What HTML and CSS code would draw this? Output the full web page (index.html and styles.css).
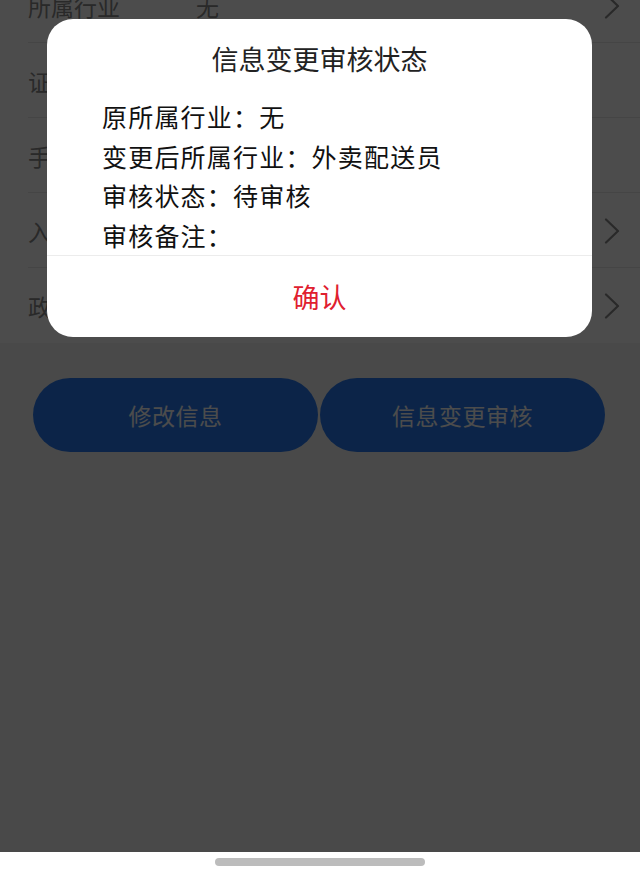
FILE: index.html
```html
<!DOCTYPE html>
<html lang="zh-CN">
<head>
<meta charset="utf-8">
<title>信息变更审核状态</title>
<link rel="stylesheet" href="styles.css">
</head>
<body>
<div class="screen">
  <div class="page">
    <ul class="list">
      <li class="row"><span class="label">所属行业</span><span class="value">无</span><svg class="chev" viewBox="0 0 16 26"><path d="M2 1.5 L14 13 L2 24.5" /></svg></li>
      <li class="row"><span class="label">证件号码</span><span class="value"></span></li>
      <li class="row"><span class="label">手机号码</span><span class="value"></span></li>
      <li class="row"><span class="label">入职时间</span><span class="value"></span><svg class="chev" viewBox="0 0 16 26"><path d="M2 1.5 L14 13 L2 24.5" /></svg></li>
      <li class="row last"><span class="label">政治面貌</span><span class="value"></span><svg class="chev" viewBox="0 0 16 26"><path d="M2 1.5 L14 13 L2 24.5" /></svg></li>
    </ul>
    <div class="actions">
      <button class="btn">修改信息</button>
      <button class="btn">信息变更审核</button>
    </div>
  </div>
  <div class="mask"></div>
  <div class="dialog">
    <div class="dialog-title">信息变更审核状态</div>
    <div class="dialog-body">
      <p>原所属行业：无</p>
      <p>变更后所属行业：外卖配送员</p>
      <p>审核状态：待审核</p>
      <p>审核备注：</p>
    </div>
    <div class="dialog-footer">确认</div>
  </div>
</div>
<div class="home-bar"><span class="indicator"></span></div>
</body>
</html>
```
FILE: styles.css
```css
* { box-sizing: border-box; }
html, body {
  margin: 0;
  padding: 0;
  font-family: "Noto Sans CJK SC", "Noto Sans", sans-serif;
}
body { width: 640px; height: 880px; overflow: hidden; background: #fff; }

.screen {
  position: relative;
  height: 852px;
  overflow: hidden;
  background: #f5f5f5;
}
.page { display: flex; flex-direction: column; }

.list {
  list-style: none;
  margin: -32px 0 0 0;
  padding: 0;
  background: #fff;
}
.row {
  display: flex;
  align-items: center;
  height: 75px;
  padding: 0 20px 0 28px;
  position: relative;
  font-size: 23px;
  color: #8a8a8a;
}
.row::after {
  content: "";
  position: absolute;
  left: 28px;
  right: 0;
  bottom: 0;
  height: 1px;
  background: #e6e6e6;
}
.row.last::after { display: none; }
.label { width: 168px; }
.value { flex: 1; }
.chev { width: 16px; height: 26px; margin-left: auto; }
.chev path { fill: none; stroke: #8a8a8a; stroke-width: 2.2; stroke-linecap: round; stroke-linejoin: round; }

.actions {
  display: flex;
  gap: 2px;
  padding: 35px 35px 0 33px;
}
.btn {
  flex: 1;
  height: 74px;
  border: none;
  border-radius: 37px;
  background: #2b7bf0;
  color: #fff;
  font-family: inherit;
  font-size: 23px;
  letter-spacing: 0.5px;
}

.mask {
  position: absolute;
  inset: 0;
  background: rgba(0, 0, 0, 0.7);
}

.dialog {
  position: absolute;
  top: 19px;
  left: 47px;
  width: 545px;
  background: #fff;
  border-radius: 26px;
  overflow: hidden;
}
.dialog-title {
  padding-top: 21px;
  line-height: 38px;
  font-size: 27px;
  text-align: center;
  color: #222;
}
.dialog-body {
  padding: 19px 20px 0 55px;
  border-bottom: 1px solid #ececec;
}
.dialog-body p {
  margin: 0;
  font-size: 25px;
  letter-spacing: 1.2px;
  line-height: 39.5px;
  color: #111;
  font-weight: 400;
}
.dialog-footer {
  height: 81px;
  line-height: 81px;
  text-align: center;
  font-size: 27px;
  color: #e0202f;
}

.home-bar {
  height: 28px;
  display: flex;
  justify-content: center;
  padding-top: 6px;
}
.indicator {
  width: 210px;
  height: 8px;
  border-radius: 4px;
  background: #bcbcbc;
}
```
